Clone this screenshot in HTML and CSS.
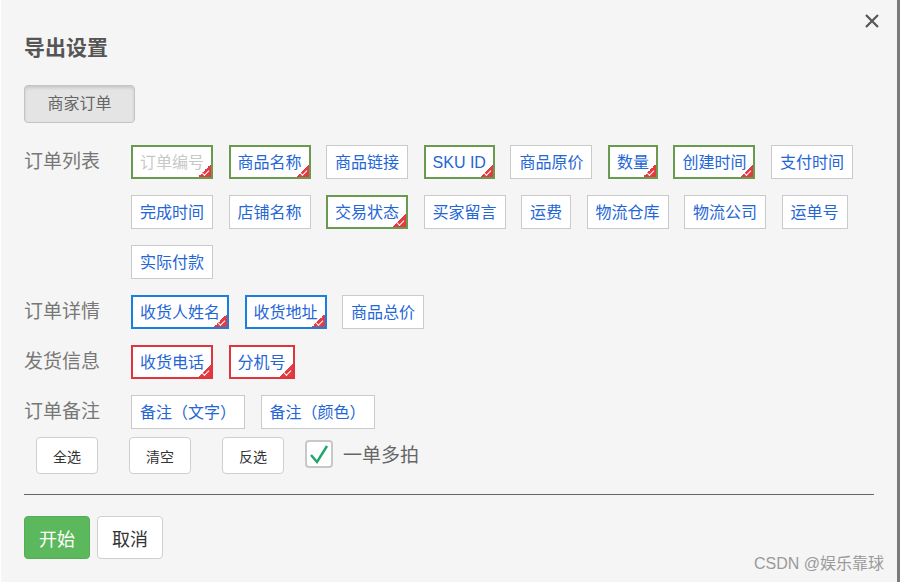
FILE: index.html
```html
<!DOCTYPE html>
<html lang="zh-CN">
<head>
    <meta charset="UTF-8">
    <meta name="viewport" content="width=device-width, initial-scale=1.0">
    <title>导出设置</title>
    <link rel="stylesheet" href="styles.css">
</head>
<body>
    <div class="dialog">
        <span class="dialog-close">
            <svg width="16" height="16" viewBox="0 0 16 16"><path d="M2 2 L14 14 M14 2 L2 14" stroke="#555" stroke-width="2.2" fill="none"/></svg>
        </span>
        <h1 class="dialog-title">导出设置</h1>
        <div class="tab-btn">商家订单</div>

        <div class="section">
            <div class="section-label">订单列表</div>
            <div class="tags">
                <span class="tag tag-disabled on-green">订单编号<i class="mark"></i></span>
                <span class="tag on-green">商品名称<i class="mark"></i></span>
                <span class="tag">商品链接</span>
                <span class="tag on-green">SKU ID<i class="mark"></i></span>
                <span class="tag">商品原价</span>
                <span class="tag on-green">数量<i class="mark"></i></span>
                <span class="tag on-green">创建时间<i class="mark"></i></span>
                <span class="tag">支付时间</span>
                <span class="tag">完成时间</span>
                <span class="tag">店铺名称</span>
                <span class="tag on-green">交易状态<i class="mark"></i></span>
                <span class="tag">买家留言</span>
                <span class="tag">运费</span>
                <span class="tag">物流仓库</span>
                <span class="tag">物流公司</span>
                <span class="tag">运单号</span>
                <span class="tag">实际付款</span>
            </div>
        </div>
        <div class="section">
            <div class="section-label">订单详情</div>
            <div class="tags">
                <span class="tag on-blue">收货人姓名<i class="mark"></i></span>
                <span class="tag on-blue">收货地址<i class="mark"></i></span>
                <span class="tag">商品总价</span>
            </div>
        </div>
        <div class="section">
            <div class="section-label">发货信息</div>
            <div class="tags">
                <span class="tag on-red">收货电话<i class="mark"></i></span>
                <span class="tag on-red">分机号<i class="mark"></i></span>
            </div>
        </div>
        <div class="section">
            <div class="section-label">订单备注</div>
            <div class="tags">
                <span class="tag">备注（文字）</span>
                <span class="tag">备注（颜色）</span>
            </div>
        </div>

        <div class="actions">
            <button class="small-btn">全选</button>
            <button class="small-btn">清空</button>
            <button class="small-btn">反选</button>
            <label class="check">
                <span class="check-box">
                    <svg width="22" height="22" viewBox="0 0 22 22"><path d="M3 12 L9 19 L19 3" stroke="#1fa56e" stroke-width="2.4" fill="none"/></svg>
                </span>
                一单多拍
            </label>
        </div>

        <div class="divider"></div>

        <div class="footer">
            <button class="btn btn-primary">开始</button>
            <button class="btn">取消</button>
        </div>

        <div class="watermark">CSDN @娱乐靠球</div>
    </div>
</body>
</html>
```

FILE: styles.css
```css
html, body {
    margin: 0;
    padding: 0;
    background: #7a7a7a;
}
body {
    width: 900px;
    height: 582px;
    overflow: hidden;
    font-family: "Liberation Sans", "Noto Sans CJK SC", sans-serif;
}
.dialog {
    position: relative;
    width: 897px;
    height: 582px;
    box-sizing: border-box;
    padding: 36px 23px 0 23px;
    background: #f5f5f5;
    border-left: 1px solid #fff;
}
.dialog-close {
    position: absolute;
    top: 13px;
    right: 17px;
    width: 16px;
    height: 16px;
}
.dialog-close svg {
    display: block;
}
.dialog-title {
    margin: 0 0 25px 0;
    font-size: 21px;
    line-height: 24px;
    font-weight: bold;
    color: #555;
}
.tab-btn {
    width: 111px;
    height: 38px;
    box-sizing: border-box;
    border: 1px solid #c4c4c4;
    border-radius: 4px;
    background: #e4e4e4;
    box-shadow: inset 0 2px 3px rgba(0, 0, 0, 0.12);
    color: #666;
    font-size: 16px;
    line-height: 36px;
    text-align: center;
    margin-bottom: 22px;
}
.section {
    display: flex;
    margin-bottom: 16px;
}
.section-label {
    width: 107px;
    flex: none;
    font-size: 19px;
    line-height: 34px;
    color: #777;
}
.tags {
    display: flex;
    flex-wrap: wrap;
    gap: 16px 15.5px;
    width: 730px;
}
.tag {
    position: relative;
    height: 34px;
    box-sizing: border-box;
    padding: 1px 8px 0 8px;
    border: 1px solid #cacaca;
    background: #fff;
    color: #2466d6;
    font-size: 16px;
    line-height: 31px;
    white-space: nowrap;
}
.tag-disabled {
    color: #c8c8c8;
}
.on-green {
    border-color: #6a9a50;
    box-shadow: inset 0 0 0 1px #6a9a50;
}
.on-blue {
    border-color: #1a7fdf;
    box-shadow: inset 0 0 0 1px #1a7fdf;
}
.on-red {
    border-color: #e1353d;
    box-shadow: inset 0 0 0 1px #e1353d;
}
.mark {
    position: absolute;
    right: 1px;
    bottom: 1px;
    width: 13px;
    height: 13px;
    background: linear-gradient(to bottom right, transparent 50%, #e33b42 50%);
}
.mark::after {
    content: "";
    position: absolute;
    right: 2px;
    bottom: 3px;
    width: 6px;
    height: 3px;
    border-left: 1.5px solid #fff;
    border-bottom: 1.5px solid #fff;
    transform: rotate(-45deg);
}
.actions {
    display: flex;
    align-items: center;
    margin: -8px 0 0 12px;
    height: 37px;
}
.small-btn {
    width: 62px;
    height: 37px;
    margin-right: 31px;
    border: 1px solid #cfcfcf;
    border-radius: 4px;
    background: #fff;
    color: #333;
    font-family: "Liberation Sans", "Noto Sans CJK SC", sans-serif;
    font-size: 14px;
    padding: 0;
}
.small-btn:nth-child(3) {
    margin-right: 21px;
}
.check {
    display: flex;
    align-items: center;
    margin-top: -4px;
    font-size: 19px;
    color: #666;
}
.check-box {
    display: flex;
    align-items: center;
    justify-content: center;
    width: 28px;
    height: 28px;
    box-sizing: border-box;
    margin-right: 10px;
    border: 2px solid #c8c8c8;
    border-radius: 4px;
    background: #fff;
}
.divider {
    height: 1px;
    width: 850px;
    margin-top: 20px;
    background: #666;
}
.footer {
    display: flex;
    gap: 7px;
    margin-top: 21px;
}
.btn {
    width: 66px;
    height: 43px;
    border: 1px solid #cfcfcf;
    border-radius: 4px;
    background: #fff;
    color: #333;
    font-family: "Liberation Sans", "Noto Sans CJK SC", sans-serif;
    font-size: 18px;
    padding: 0;
}
.btn-primary {
    background: #5cb85c;
    border-color: #54ad54;
    color: #fff;
}
.watermark {
    position: absolute;
    right: 13px;
    bottom: 8px;
    font-size: 16px;
    color: #9a9a9a;
}
```
